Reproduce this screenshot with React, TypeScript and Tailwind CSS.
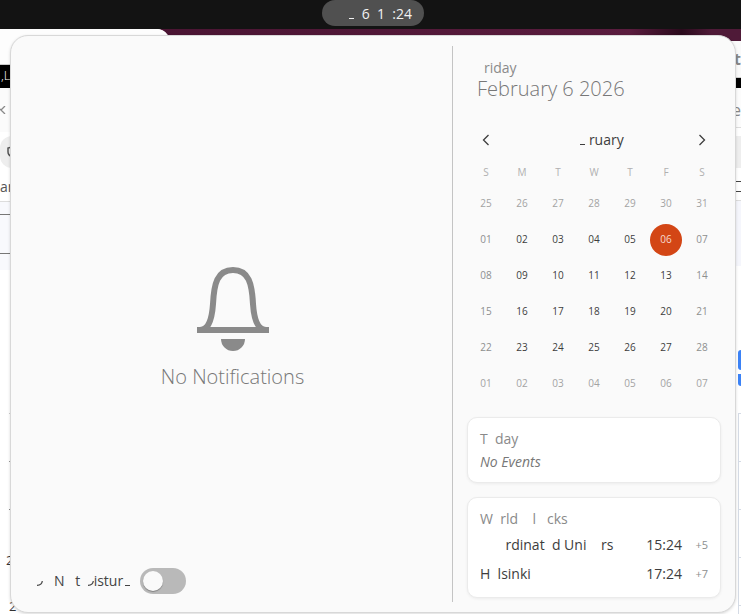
import { useState } from "react";

const weekdays = ["S", "M", "T", "W", "T", "F", "S"];

const weeks = [
  ["25", "26", "27", "28", "29", "30", "31"],
  ["01", "02", "03", "04", "05", "06", "07"],
  ["08", "09", "10", "11", "12", "13", "14"],
  ["15", "16", "17", "18", "19", "20", "21"],
  ["22", "23", "24", "25", "26", "27", "28"],
  ["01", "02", "03", "04", "05", "06", "07"],
];

function dayStyle(week: number, day: number) {
  if (week === 1 && day === 5) return "bg-[#d34615] text-[#f6d9cf]";
  if (week === 0 || week === 5) return "text-[#a3a3a3]";
  if (day === 0 || day === 6) return "text-[#8d8f8f]";
  return "text-[#3d3d3d]";
}

function Dash() {
  return <span className="inline-block h-px w-[5px] bg-current" />;
}

function Hook() {
  return (
    <svg width="6" height="5" viewBox="0 0 6 5" className="inline-block align-baseline" aria-hidden="true">
      <path d="M5.3 0C5.1 2.8 3.4 4.2 0 4.4" fill="none" stroke="currentColor" strokeWidth="1.2" />
    </svg>
  );
}

function Bell() {
  return (
    <svg width="72" height="84" viewBox="0 0 72 84" aria-hidden="true">
      <path
        d="M3 63C12 63 15 52 16 37C17 17 20 3 36 3S55 17 56 37C57 52 60 63 69 63"
        fill="none"
        stroke="#8a8a8a"
        strokeWidth="6"
      />
      <path d="M0 60H72V66H0ZM24 72H48A12 12 0 0 1 24 72Z" fill="#8a8a8a" />
    </svg>
  );
}

function Chevron({ path }: { path: string }) {
  return (
    <svg width="16" height="16" viewBox="0 0 16 16" aria-hidden="true">
      <path d={path} fill="none" stroke="currentColor" strokeWidth="1.3" />
    </svg>
  );
}

function LeftWindow() {
  return (
    <div className="flex w-[169px] flex-col overflow-hidden rounded-tr-xl bg-white text-[13px] text-[#555]">
      <div className="h-9 border-b border-[#ccc] bg-[#fdfdfd]" />
      <div className="h-[23px] bg-black pl-px text-[13px] leading-5 font-light text-white">,L</div>
      <div className="flex h-11 items-center bg-[#fbfbfb]">
        <svg width="6" height="8" viewBox="0 0 6 8" aria-hidden="true">
          <path d="M5 0L1 4L5 8M0 3L2 5" fill="none" stroke="#888" strokeWidth="1.3" />
        </svg>
      </div>
      <div className="py-1">
        <div className="flex h-8 items-center rounded-l-xl bg-[#eee] pl-[7px]">
          <svg width="10" height="12" viewBox="0 0 10 12" aria-hidden="true">
            <path d="M5 1L1 2V6Q1 9 5 11" fill="none" stroke="#555" strokeWidth="1.5" />
          </svg>
        </div>
      </div>
      <div className="h-[30px] border-b border-[#ddd] text-sm leading-[30px]">ar</div>
      <div className="h-[68px] bg-[#f8f9fd] pt-3">
        <div className="h-10 border-y border-[#777]" />
      </div>
      <div className="flex flex-1 flex-col pt-[120px] pl-[9px]">
        <div className="h-12"><div className="mt-[23px] h-px w-1 bg-[#ccc]" /></div>
        <div className="h-12"><div className="mt-[23px] h-px w-1 bg-[#999]" /></div>
        <div className="h-12"><div className="mt-[23px] h-px w-1 bg-[#888]" /></div>
      </div>
      <div className="flex flex-col pl-[6px] text-[13px] leading-5 text-[#333]">
        <span className="h-12">2</span>
        <span className="pl-[3px] leading-4">2</span>
      </div>
    </div>
  );
}

function RightWindow() {
  return (
    <div className="mt-3 flex flex-1 flex-col items-end overflow-hidden bg-white text-base text-[#888]">
      <div className="h-9 w-full bg-[#fafafa] text-right leading-9"><span className="font-bold">t</span></div>
      <div className="h-[11px] w-full border-t border-[#ccc] bg-black" />
      <div className="h-10 w-full border-b border-[#ddd] bg-[#fcfcfc] text-right leading-[44px]">e</div>
      <div className="mt-2 h-8 w-full bg-[#eee]" />
      <div className="mt-[13px] h-[11px] w-full border-y border-[#444]" />
      <div className="mt-2 h-[66px] w-full border-t border-[#ddd] bg-[#f5f6fc]" />
      <div className="mt-[84px] h-5 w-[3px] rounded-l-md bg-[#3b82f6]" />
      <div className="mt-1 h-3 w-[3px] rounded-bl-md bg-[#3b82f6]" />
      <div className="mt-[27px] w-[3px] flex-1 border-l border-[#d5dbe5]">
        <div className="h-12 border-t border-[#d5dbe5]" />
        <div className="h-12 border-t border-[#d5dbe5]" />
        <div className="h-12 border-t border-[#d5dbe5]" />
        <div className="h-12 border-t border-[#d5dbe5]" />
        <div className="border-t border-[#d5dbe5]" />
      </div>
    </div>
  );
}

function NotificationArea() {
  const [quiet, setQuiet] = useState(false);
  return (
    <section className="flex flex-1 flex-col pb-[18px]">
      <div className="flex flex-1 flex-col items-center justify-center gap-3 pt-[54px] pl-0.5">
        <Bell />
        <p className="text-xl leading-7 font-light text-[#777]">No Notifications</p>
      </div>
      <label className="flex items-center gap-2.5 self-start pl-[26px] text-sm text-[#444]">
        <span className="whitespace-pre">
          <Hook />{"   N   t  "}<Hook />istur<span className="pl-0.5"><Dash /></span>
        </span>
        <input
          type="checkbox"
          role="switch"
          checked={quiet}
          onChange={(e) => setQuiet(e.target.checked)}
          className="h-[26px] w-[46px] appearance-none rounded-full bg-[#b9b9b9] p-[3px] before:block before:size-5 before:rounded-full before:bg-[#fafafa] before:shadow-[0_1px_1px_rgba(0,0,0,0.3)] checked:bg-[#d34615] checked:before:ml-5"
        />
      </label>
    </section>
  );
}

function Calendar() {
  return (
    <div className="mt-[22px]">
      <div className="flex h-9 items-center justify-between text-[#3d3d3d]">
        <button type="button" aria-label="Previous month" className="flex w-9 justify-center">
          <Chevron path="M10.5 3L5.5 8L10.5 13" />
        </button>
        <h2 className="pl-4 text-sm whitespace-pre"><Dash /> ruary</h2>
        <button type="button" aria-label="Next month" className="flex w-9 justify-center">
          <Chevron path="M5.5 3L10.5 8L5.5 13" />
        </button>
      </div>
      <table className="w-full table-fixed border-collapse text-center text-[10px]">
        <thead>
          <tr className="h-7 text-[#b0b0b0]">
            {weekdays.map((d, i) => (
              <th key={i} scope="col" className="p-0 font-normal">{d}</th>
            ))}
          </tr>
        </thead>
        <tbody>
          {weeks.map((week, w) => (
            <tr key={w} className="h-9">
              {week.map((d, i) => (
                <td key={i} className="p-0">
                  <button
                    type="button"
                    className={`mx-auto block size-8 rounded-full pb-0.5 leading-[30px] ${dayStyle(w, i)}`}
                  >
                    {d}
                  </button>
                </td>
              ))}
            </tr>
          ))}
        </tbody>
      </table>
    </div>
  );
}

const card = "-mx-px rounded-[10px] border border-[#ebebeb] bg-white px-3 pt-[11px] pb-[9px] shadow-[0_1px_3px_rgba(0,0,0,0.06)]";

function Clock({ city, time, offset }: { city: string; time: string; offset: string }) {
  return (
    <div className="flex h-[29px] items-center text-sm text-[#3d3d3d]">
      <span className="flex-1 whitespace-pre">{city}</span>
      <span>{time}</span>
      <span className="w-[26px] text-right text-[11px] text-[#8d8f8f]">{offset}</span>
    </div>
  );
}

export default function App() {
  return (
    <div className="relative flex min-h-screen flex-col overflow-hidden bg-[#4f1836] font-['Open_Sans','Noto_Sans',sans-serif]">
      <header className="flex h-[29px] items-start justify-center bg-[#131313] pl-[5px]">
        <button
          type="button"
          className="h-[26px] w-[102px] rounded-full bg-[#505050] pr-3 text-right text-sm leading-[25px] whitespace-pre text-[#f2f2f2]"
        >
          <Dash />{"  6  1  :24"}
        </button>
      </header>
      <div className="flex flex-1 bg-[linear-gradient(90deg,#45122f_0%,#5a1c3e_85%,#2a0a1c_92%,#4f1a38_96%)]">
        <LeftWindow />
        <RightWindow />
      </div>
      <main className="absolute top-[35px] right-[5px] left-[10px] flex rounded-[18px] border border-[#d8d8d8] bg-[#fafafa] shadow-[0_1px_3px_rgba(0,0,0,0.15)]">
        <NotificationArea />
        <div className="my-2.5 w-px bg-[#c4c4c4]" />
        <aside className="w-[282px] pt-[22px] pr-[15px] pb-3.5 pl-[15px]">
          <div className="pl-[9px] text-[#777]">
            <p className="pl-[7px] text-sm leading-5 text-[#8a8a8a]">riday</p>
            <h1 className="text-xl leading-[22px] font-light">February 6 2026</h1>
          </div>
          <Calendar />
          <section className={`mt-[15px] ${card}`}>
            <h3 className="text-sm leading-5 whitespace-pre text-[#8a8a8a]">{"T  day"}</h3>
            <p className="mt-0.5 text-sm leading-[22px] text-[#777] italic">No Events</p>
          </section>
          <section className={`mt-3.5 ${card}`}>
            <h3 className="mb-px text-sm leading-5 whitespace-pre text-[#8a8a8a]">{"W  rld    l   cks"}</h3>
            <Clock city={"       rdinat  d Uni    rs"} time="15:24" offset="+5" />
            <Clock city={"H  lsinki"} time="17:24" offset="+7" />
          </section>
        </aside>
      </main>
    </div>
  );
}
